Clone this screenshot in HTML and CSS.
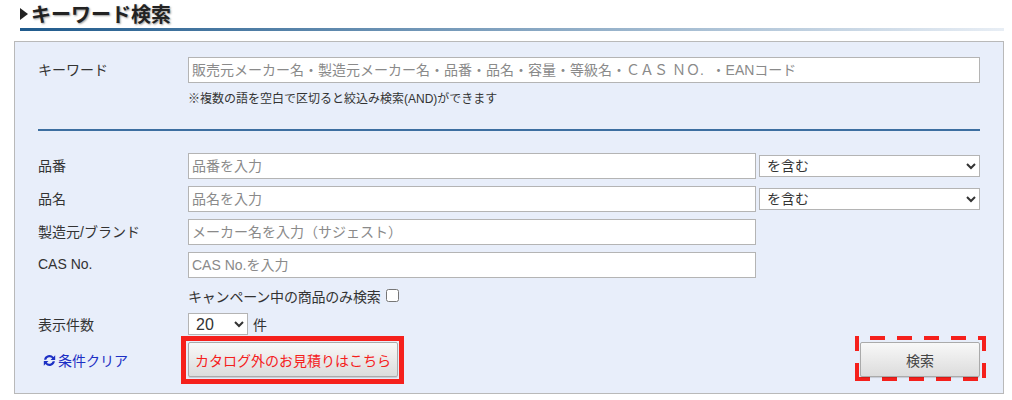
FILE: index.html
```html
<!DOCTYPE html>
<html lang="ja">
  <head>
    <meta charset="UTF-8" />
    <title>キーワード検索</title>
    <link rel="stylesheet" href="styles.css">
  </head>
  <body>
    <h2 class="search-title"><span class="title-mark"></span>キーワード検索</h2>

    <form class="search-box">
      <div class="row">
        <label class="row-label">キーワード</label>
        <input class="text-input wide" type="text" placeholder="販売元メーカー名・製造元メーカー名・品番・品名・容量・等級名・ＣＡＳ ＮＯ.  ・EANコード" />
      </div>
      <p class="note">※複数の語を空白で区切ると絞込み検索(AND)ができます</p>
      <hr class="divider" />

      <div class="row row-fields">
        <label class="row-label">品番</label>
        <input class="text-input" type="text" placeholder="品番を入力" />
        <select class="match-select"><option>を含む</option></select>
      </div>
      <div class="row row-fields">
        <label class="row-label">品名</label>
        <input class="text-input" type="text" placeholder="品名を入力" />
        <select class="match-select"><option>を含む</option></select>
      </div>
      <div class="row row-fields">
        <label class="row-label">製造元/ブランド</label>
        <input class="text-input" type="text" placeholder="メーカー名を入力（サジェスト）" />
      </div>
      <div class="row row-fields">
        <label class="row-label">CAS No.</label>
        <input class="text-input" type="text" placeholder="CAS No.を入力" />
      </div>

      <div class="row row-check">
        <span class="row-label"></span>
        <label class="check-label">キャンペーン中の商品のみ検索 <input type="checkbox" /></label>
      </div>
      <div class="row row-count">
        <label class="row-label">表示件数</label>
        <span class="count-wrap"><select class="count-select"><option>20</option></select> 件</span>
      </div>

      <div class="row row-actions">
        <a class="clear-link" href="#">
          <svg class="clear-icon" viewBox="0 0 24 24" width="13" height="13">
            <path d="M2 10.5A10 10 0 0 1 19.5 5.5L22.5 2.5V11H14l3-3A6.5 6.5 0 0 0 6 10.5z" />
            <path d="M22 13.5A10 10 0 0 1 4.500 18.500L1.500 21.500V13H10l-3 3A6.500 6.500 0 0 0 18 13.500z" />
          </svg>条件クリア</a>
        <div class="estimate-frame"><button class="grey-btn estimate-btn" type="button">カタログ外のお見積りはこちら</button></div>
        <div class="submit-frame"><button class="grey-btn submit-btn" type="button">検索</button></div>
      </div>
    </form>
  </body>
</html>
```

FILE: styles.css
```css
body {
  margin: 0;
  height: 400px;
  overflow: hidden;
  font-family: "Liberation Sans", "Noto Sans CJK JP", sans-serif;
  font-size: 14px;
  color: #333;
  background: #fff;
}

.search-title {
  margin: 0 8px 0 20px;
  height: 31px;
  box-sizing: border-box;
  padding-top: 1px;
  display: flex;
  align-items: center;
  font-size: 20px;
  line-height: 26px;
  font-weight: bold;
  color: #222;
  text-shadow: 1px 1px 2px #999;
  border-bottom: 3px solid;
  border-image: linear-gradient(to right, #1f5a8c, #e8eef5) 1;
}

.title-mark {
  width: 0;
  height: 0;
  margin: -1px 3px 0 0;
  border-left: 8px solid #222;
  border-top: 6px solid transparent;
  border-bottom: 6px solid transparent;
}

.search-box {
  margin: 10px 8px 0 14px;
  height: 353px;
  box-sizing: border-box;
  padding: 15px 23px 0 23px;
  background: #e8eefa;
  border: 1px solid #b9b9b9;
}

.row {
  display: flex;
  align-items: center;
}

.row-label {
  flex: none;
  width: 150px;
  padding-bottom: 3px;
  box-sizing: border-box;
}

.text-input {
  width: 568px;
  height: 26px;
  box-sizing: border-box;
  padding: 0 3px;
  border: 1px solid #b4b4b4;
  background: #fff;
  font-family: inherit;
  font-size: 14px;
}

.text-input.wide {
  width: 792px;
}

.text-input::placeholder {
  color: #8a8a8a;
}

.note {
  margin: 8px 0 0 150px;
  font-size: 12px;
  line-height: 17px;
}

.divider {
  margin: 21px 0 22px;
  height: 2px;
  border: 0;
  background: #3c6ea0;
}

.row-fields {
  margin-bottom: 7px;
}

.match-select {
  width: 221px;
  height: 22px;
  margin-left: 3px;
  padding-left: 3px;
  box-sizing: border-box;
  border: 1px solid #b4b4b4;
  border-radius: 0;
  background: #fff;
  font-family: inherit;
  font-size: 14px;
  color: #333;
}

.row-check {
  margin-top: 9px;
  height: 17px;
}

.check-label {
  display: flex;
  align-items: center;
  gap: 5px;
  letter-spacing: -0.2px;
}

.check-label input {
  margin: 0;
}

.row-count {
  margin-top: 9px;
}

.row-count .row-label {
  padding-bottom: 0;
}

.count-wrap {
  display: flex;
  align-items: center;
  gap: 5px;
}

.count-select {
  width: 60px;
  height: 22px;
  padding-left: 3px;
  box-sizing: border-box;
  border: 1px solid #b4b4b4;
  border-radius: 0;
  background: #fff;
  font-family: inherit;
  font-size: 16px;
  color: #333;
}

.row-actions {
  margin-top: 1px;
  align-items: flex-start;
}

.clear-link {
  flex: none;
  width: 143px;
  margin-top: 14px;
  padding-left: 5px;
  box-sizing: border-box;
  display: flex;
  align-items: center;
  gap: 2px;
  color: #1c2fc4;
  text-decoration: none;
}

.clear-icon {
  fill: #1c2fc4;
}

.estimate-frame {
  border: 5px solid #f5201c;
  padding: 1px 1px 2px 2px;
}

.grey-btn {
  display: block;
  box-sizing: border-box;
  border: 1px solid #aaa;
  border-radius: 2px;
  background: linear-gradient(to bottom, #f8f8f8, #dcdcdc);
  font-family: inherit;
  font-size: 14px;
  color: #444;
  box-shadow: 0 1px 1px rgba(0, 0, 0, 0.15);
}

.estimate-btn {
  width: 210px;
  height: 35px;
  color: #f5201c;
}

/* long dashes drawn by hand, border: dashed comes out too short */
.submit-frame {
  margin-left: auto;
  margin-right: -6px;
  padding: 6px 6px 4px 5px;
  background:
    repeating-linear-gradient(to right, #f5201c 0 15px, transparent 15px 27px) 15px 0 / 100% 4px no-repeat,
    repeating-linear-gradient(to right, #f5201c 0 15px, transparent 15px 27px) 0 100% / 100% 4px no-repeat,
    repeating-linear-gradient(to bottom, #f5201c 0 15px, transparent 15px 27px) 0 0 / 4px 100% no-repeat,
    repeating-linear-gradient(to bottom, #f5201c 0 15px, transparent 15px 27px) 100% 0 / 4px 100% no-repeat;
}

.submit-btn {
  width: 120px;
  height: 35px;
}
```
